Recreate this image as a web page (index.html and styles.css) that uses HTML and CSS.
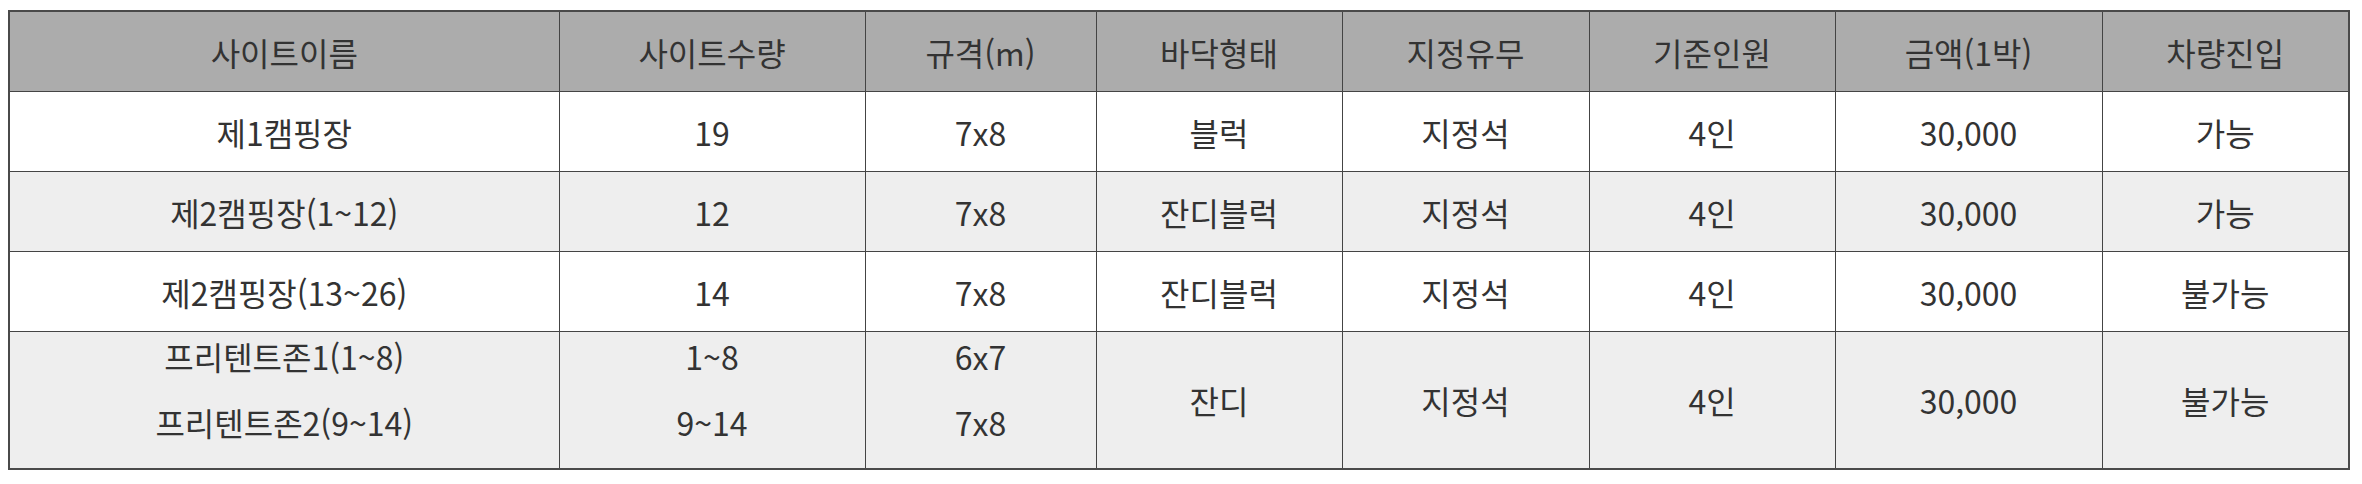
FILE: index.html
```html
<!DOCTYPE html>
<html lang="ko">
<head>
<meta charset="utf-8">
<title>사이트 안내</title>
<link rel="stylesheet" href="styles.css">
</head>
<body>
<table class="site-table">
  <colgroup>
    <col class="c1"><col class="c2"><col class="c3"><col class="c4">
    <col class="c5"><col class="c6"><col class="c7"><col class="c8">
  </colgroup>
  <thead>
    <tr>
      <th>사이트이름</th><th>사이트수량</th><th>규격(m)</th><th>바닥형태</th>
      <th>지정유무</th><th>기준인원</th><th>금액(1박)</th><th>차량진입</th>
    </tr>
  </thead>
  <tbody>
    <tr>
      <td>제1캠핑장</td><td>19</td><td>7x8</td><td>블럭</td>
      <td>지정석</td><td>4인</td><td>30,000</td><td>가능</td>
    </tr>
    <tr class="alt">
      <td>제2캠핑장(1~12)</td><td>12</td><td>7x8</td><td>잔디블럭</td>
      <td>지정석</td><td>4인</td><td>30,000</td><td>가능</td>
    </tr>
    <tr>
      <td>제2캠핑장(13~26)</td><td>14</td><td>7x8</td><td>잔디블럭</td>
      <td>지정석</td><td>4인</td><td>30,000</td><td>불가능</td>
    </tr>
    <tr class="alt tall">
      <td><div class="multi"><p>프리텐트존1(1~8)</p><p>프리텐트존2(9~14)</p></div></td>
      <td><div class="multi"><p>1~8</p><p>9~14</p></div></td>
      <td><div class="multi"><p>6x7</p><p>7x8</p></div></td>
      <td>잔디</td><td>지정석</td><td>4인</td><td>30,000</td><td>불가능</td>
    </tr>
  </tbody>
</table>
</body>
</html>
```

FILE: styles.css
```css
html, body {
  background: #ffffff;
}
body {
  margin: 0;
  padding: 10px 8px;
  font-family: "Noto Sans CJK KR", "Noto Sans", sans-serif;
  color: #333333;
}
.site-table {
  border-collapse: collapse;
  table-layout: fixed;
  width: 2340px;
  border: 2px solid #4a4a4a;
  font-size: 32px;
}
.c1 { width: 550px; }
.c2 { width: 306px; }
.c3 { width: 231px; }
.c4 { width: 246px; }
.c5 { width: 247px; }
.c6 { width: 246px; }
.c7 { width: 267px; }
.c8 { width: 247px; }
.site-table th,
.site-table td {
  border: 1px solid #444444;
  height: 79px;
  padding: 0;
  text-align: center;
  vertical-align: middle;
  font-weight: 400;
  line-height: 42px;
}
.site-table thead th {
  background: #acacac;
  color: #333333;
}
.site-table tbody tr {
  background: #ffffff;
}
.site-table tbody tr.alt {
  background: #eeeeee;
}
.site-table tr.tall td {
  height: 136px;
}
.multi {
  padding-bottom: 22px;
}
.multi p {
  margin: 0;
}
.multi p + p {
  margin-top: 24px;
}
```
